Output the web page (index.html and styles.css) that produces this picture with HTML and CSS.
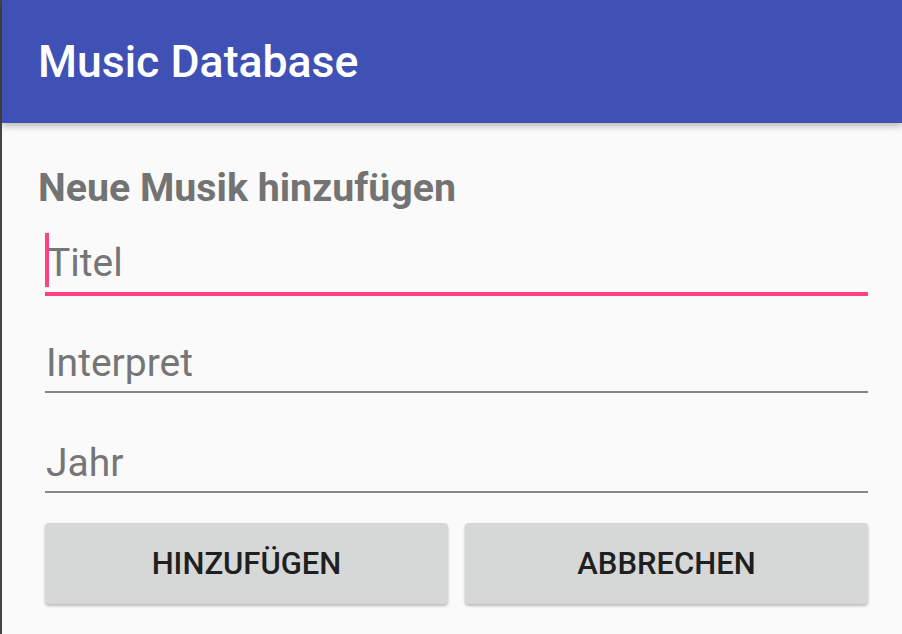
FILE: index.html
```html
<!DOCTYPE html>
<html lang="de">
<head>
<meta charset="utf-8">
<title>Music Database</title>
<link rel="stylesheet" href="styles.css">
</head>
<body>
<div class="app">
  <header class="toolbar">
    <h1 class="toolbar-title">Music Database</h1>
  </header>
  <main class="content">
    <h2 class="form-title">Neue Musik hinzufügen</h2>
    <div class="field field-focused">
      <span class="cursor"></span>
      <span class="hint">Titel</span>
    </div>
    <div class="field">
      <span class="hint">Interpret</span>
    </div>
    <div class="field">
      <span class="hint">Jahr</span>
    </div>
    <div class="actions">
      <button class="btn">HINZUFÜGEN</button>
      <button class="btn">ABBRECHEN</button>
    </div>
  </main>
</div>
</body>
</html>
```

FILE: styles.css
```css
html, body {
  margin: 0;
  padding: 0;
  height: 100%;
}
body {
  background: #fafafa;
  font-family: Roboto, "Liberation Sans", sans-serif;
  overflow: hidden;
}
.app {
  height: 634px;
  border-left: 2px solid #454545;
  box-sizing: border-box;
  background: #fafafa;
}
.toolbar {
  height: 123px;
  background: #3f51b5;
  display: flex;
  align-items: center;
  padding-left: 36px;
  box-shadow: 0 3px 7px rgba(0, 0, 0, 0.28);
  position: relative;
  z-index: 1;
}
.toolbar-title {
  margin: 0;
  color: #ffffff;
  font-size: 44.6px;
  font-weight: 500;
  line-height: 52px;
}
.content {
  padding: 45px 34px 0 36px;
  display: flex;
  flex-direction: column;
}
.form-title {
  margin: 0;
  font-size: 39.3px;
  font-weight: 700;
  line-height: 40px;
  color: #737373;
}
.field {
  position: relative;
  margin-left: 7px;
  margin-top: 32px;
  height: 46px;
  padding-bottom: 5px;
  border-bottom: 2px solid #878787;
}
.field + .field {
  margin-top: 47px;
}
.field-focused {
  border-bottom: 4px solid #ff4081;
  height: 46px;
  padding-bottom: 6px;
  margin-bottom: -3px;
}
.hint {
  display: block;
  font-size: 39px;
  line-height: 46px;
  color: #767676;
  padding-left: 1px;
}
.field-focused .hint {
  padding-left: 2px;
}
.cursor {
  position: absolute;
  left: 0;
  top: -7px;
  width: 4px;
  height: 54px;
  background: #ff4081;
}
.actions {
  display: flex;
  gap: 17px;
  margin-left: 7px;
  margin-top: 30px;
}
.btn {
  flex: 1;
  height: 81px;
  border: none;
  border-radius: 4px;
  background: #d6d7d7;
  box-shadow: 0 2px 3px rgba(0, 0, 0, 0.25);
  font-family: Roboto, "Liberation Sans", sans-serif;
  font-size: 31px;
  font-weight: 500;
  color: #1f1f1f;
  padding: 0;
}
```
